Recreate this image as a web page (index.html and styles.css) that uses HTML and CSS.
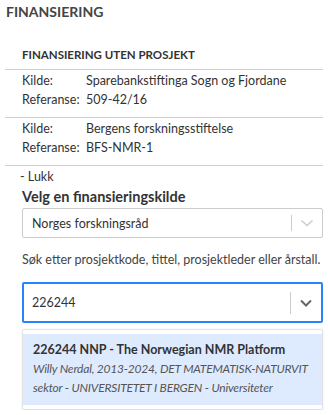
FILE: index.html
```html
<!DOCTYPE html>
<html lang="no">
<head>
<meta charset="utf-8">
<link rel="stylesheet" href="styles.css">
</head>
<body>
<div class="page">
  <h1 class="title">FINANSIERING</h1>
  <h2 class="subtitle">FINANSIERING UTEN PROSJEKT</h2>
  <div class="entry">
    <div class="row"><span class="lbl">Kilde:</span><span>Sparebankstiftinga Sogn og Fjordane</span></div>
    <div class="row"><span class="lbl">Referanse:</span><span>509-42/16</span></div>
  </div>
  <div class="entry">
    <div class="row"><span class="lbl">Kilde:</span><span>Bergens forskningsstiftelse</span></div>
    <div class="row"><span class="lbl">Referanse:</span><span>BFS-NMR-1</span></div>
  </div>
  <div class="rule"></div>
  <div class="form">
    <div class="close">- Lukk</div>
    <div class="field-label">Velg en finansieringskilde</div>
    <div class="select">
      <span class="value">Norges forskningsråd</span>
      <span class="sep"></span>
      <span class="chev light"><svg width="20" height="20" viewBox="0 0 20 20"><path d="M4.5 7.5 L10 12.5 L15.5 7.5" fill="none" stroke="currentColor" stroke-width="1.6"/></svg></span>
    </div>
    <div class="hint">Søk etter prosjektkode, tittel, prosjektleder eller årstall.</div>
    <div class="select focused">
      <span class="value">226244</span>
      <span class="sep"></span>
      <span class="chev dark"><svg width="20" height="20" viewBox="0 0 20 20"><path d="M5 7.5 L10 12.5 L15 7.5" fill="none" stroke="currentColor" stroke-width="2"/></svg></span>
    </div>
    <div class="menu">
      <div class="option">
        <div class="opt-title">226244 NNP - The Norwegian NMR Platform</div>
        <div class="opt-sub">Willy Nerdal, 2013-2024, DET MATEMATISK-NATURVIT</div>
        <div class="opt-sub">sektor - UNIVERSITETET I BERGEN - Universiteter</div>
      </div>
    </div>
  </div>
</div>
</body>
</html>
```

FILE: styles.css
```css
* { box-sizing: border-box; }
html, body { margin: 0; padding: 0; background: #fff; }
body {
  font-family: "Lato", "Noto Sans", sans-serif;
  font-size: 12.5px;
  color: #333;
  width: 328px;
  overflow: hidden;
}
.page { padding: 0 5px 0 5px; }
.title {
  margin: 0;
  padding: 3px 0 0 1px;
  font-size: 14px;
  font-weight: 700;
  line-height: 18px;
  color: #444;
}
.subtitle {
  margin: 26px 0 0 0;
  padding: 0 0 6px 17px;
  font-size: 11.5px;
  font-weight: 700;
  line-height: 16px;
  color: #333;
}
.entry {
  border-top: 1px solid #d0d0d0;
  padding: 1px 0 8px 17px;
}
.row { display: flex; line-height: 19px; }
.lbl { width: 64px; flex: none; }
.rule { border-top: 1px solid #d0d0d0; }
.form { padding-left: 17px; }
.close { line-height: 19px; margin-top: 1px; margin-left: -2px; }
.field-label {
  font-size: 14.5px;
  font-weight: 700;
  line-height: 20px;
  margin-top: 1px;
  color: #333;
}
.select {
  margin-top: 1px;
  height: 30px;
  border: 1px solid #ccc;
  border-radius: 2px;
  display: flex;
  align-items: center;
  padding-left: 9px;
}
.select .value { flex: 1; }
.sep { width: 1px; height: 16px; background: #ccc; }
.chev { width: 30px; display: flex; justify-content: center; align-items: center; }
.chev.light { color: #ccc; }
.chev.dark { color: #666; }
.hint { margin-top: 13px; line-height: 18px; color: #444; white-space: nowrap; }
.select.focused {
  margin-top: 13px;
  height: 41px;
  border: 2px solid #2684ff;
  padding-left: 8px;
}
.select.focused .sep { height: 22px; }
.menu {
  margin-top: 6px;
  border: 1px solid #e2e2e2;
  border-radius: 2px;
  box-shadow: 0 1px 3px rgba(0,0,0,0.08);
  padding: 4px 0;
}
.option {
  background: #deebff;
  padding: 7px 10px 8px 10px;
}
.opt-title { font-weight: 700; line-height: 18px; }
.opt-sub {
  font-style: italic;
  font-size: 12px;
  letter-spacing: -0.2px;
  line-height: 19px;
  color: #555;
  white-space: nowrap;
}
```
